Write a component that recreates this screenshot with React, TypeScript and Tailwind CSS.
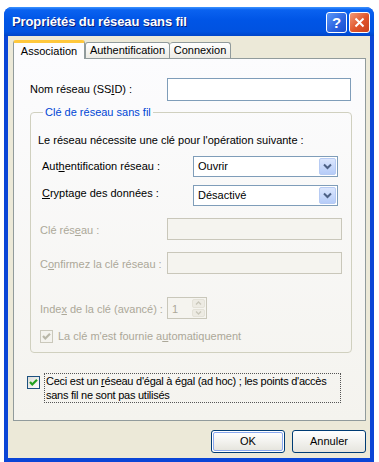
import React from "react";

const F = "font-['Liberation_Sans',Arial,sans-serif]";

function Check({ disabled }: { disabled?: boolean }) {
  return (
    <div
      className={
        "w-[13px] h-[13px] shrink-0 border flex items-center justify-center " +
        (disabled
          ? "border-[#CAC8BB] bg-[#F4F3EE]"
          : "border-[#1C5180] bg-gradient-to-br from-[#DCDCD7] to-white")
      }
    >
      <svg width="11" height="11" viewBox="0 0 11 11">
        <polyline
          points="2,5 4.3,7.5 9,2.8"
          fill="none"
          stroke={disabled ? "#B9B7A8" : "#21A121"}
          strokeWidth="2.2"
        />
      </svg>
    </div>
  );
}

function Select({ value }: { value: string }) {
  return (
    <div className="w-[145px] h-[21px] border border-[#7F9DB9] bg-white flex items-stretch p-[1px]">
      <div className="flex-1 flex items-center pl-[3px] text-black">{value}</div>
      <div className="w-[17px] rounded-[2px] border border-[#B7CBF3] bg-gradient-to-b from-[#DBE6FD] to-[#B6CCF8] flex items-center justify-center">
        <svg width="9" height="7" viewBox="0 0 9 7">
          <polyline points="1,1.5 4.5,5 8,1.5" fill="none" stroke="#4D6185" strokeWidth="2" />
        </svg>
      </div>
    </div>
  );
}

function DisBox({ w }: { w: string }) {
  return <div className={w + " h-[22px] border border-[#C9C7BA] bg-[#F5F4EF]"} />;
}

export default function App() {
  return (
    <div className={"w-[379px] h-[462px] bg-white pt-[7px] pl-[4px] pr-[5px] text-[11px] " + F}>
      <div className="h-[455px] flex flex-col rounded-t-[8px] bg-[#0A45D6] overflow-hidden">
        {/* Title bar */}
        <div className="h-[29px] shrink-0 flex items-center justify-between pl-[8px] pr-[4px] bg-[linear-gradient(to_bottom,#3D95FF_0%,#0A62F0_10%,#0055E6_45%,#0052E0_85%,#0045C8_100%)]">
          <span className="text-white font-bold text-[13px] tracking-[-0.1px] [text-shadow:1px_1px_0_#0A1F7A]">
            Propriétés du réseau sans fil
          </span>
          <div className="flex gap-[2px] pt-[1px]">
            <div className="w-[21px] h-[21px] rounded-[3px] border border-white bg-[linear-gradient(135deg,#5C98F8,#2A62E0_60%,#1A4ED0)] flex items-center justify-center text-white font-bold text-[15px] leading-none">
              ?
            </div>
            <div className="w-[21px] h-[21px] rounded-[3px] border border-white bg-[linear-gradient(135deg,#F29A78,#E0542A_55%,#C8411C)] flex items-center justify-center">
              <svg width="11" height="11" viewBox="0 0 11 11">
                <path d="M1.5 1.5 L9.5 9.5 M9.5 1.5 L1.5 9.5" stroke="white" strokeWidth="2" />
              </svg>
            </div>
          </div>
        </div>
        {/* Body */}
        <div className="flex-1 mx-[4px] mb-[4px] bg-[#ECE9D8] pt-[4px] pl-[5px] pr-[4px] flex flex-col">
          {/* Tabs */}
          <div className="h-[18px] flex items-end relative z-10">
            <div className="h-[19px] w-[72px] -mb-[1px] bg-[#FCFCFE] border-x border-[#919B9C] border-t-[3px] border-t-[#FFC83C] rounded-t-[3px] flex items-center justify-center text-black">
              Association
            </div>
            <div className="h-[16px] w-[85px] bg-gradient-to-b from-white to-[#ECEBE5] border border-b-0 border-[#919B9C] rounded-t-[3px] flex items-center justify-center text-black">
              Authentification
            </div>
            <div className="h-[16px] w-[61px] bg-gradient-to-b from-white to-[#ECEBE5] border border-b-0 border-l-0 border-[#919B9C] rounded-t-[3px] flex items-center justify-center text-black">
              Connexion
            </div>
          </div>
          {/* Panel */}
          <div className="h-[363px] border border-[#919B9C] bg-gradient-to-b from-[#FCFCFE] to-[#F4F3EE] pl-[16px] pr-[14px] flex flex-col text-black">
            <div className="mt-[19px] h-[23px] flex items-center">
              <div className="w-[137px]">
                Nom réseau (SS<u>I</u>D) :
              </div>
              <div className="flex-1 h-[23px] border border-[#7F9DB9] bg-white" />
            </div>
            <fieldset className="mt-[5px] border border-[#D0D0BF] rounded-[4px] pl-[7px] pr-[9px] h-[247px]">
              <legend className="ml-[5px] px-[2px] text-[#0046D5] leading-[13px]">Clé de réseau sans fil</legend>
              <div className="mt-[15px] leading-[13px]">Le réseau nécessite une clé pour l'opération suivante :</div>
              <div className="mt-[9px] flex items-center">
                <div className="w-[155px] pl-[4px]">
                  Aut<u>h</u>entification réseau :
                </div>
                <Select value="Ouvrir" />
              </div>
              <div className="mt-[8px] flex items-center">
                <div className="w-[155px] pl-[4px] -mt-[4px]">
                  <u>C</u>ryptage des données :
                </div>
                <Select value="Désactivé" />
              </div>
              <div className="mt-[12px] flex items-center text-[#ACA899]">
                <div className="w-[129px] pl-[2px] mt-[3px]">
                  Clé rés<u>e</u>au :
                </div>
                <DisBox w="w-[175px]" />
              </div>
              <div className="mt-[12px] flex items-center text-[#ACA899]">
                <div className="w-[129px] pl-[2px] mt-[3px]">
                  C<u>o</u>nfirmez la clé réseau :
                </div>
                <DisBox w="w-[175px]" />
              </div>
              <div className="mt-[23px] flex items-center text-[#ACA899]">
                <div className="w-[129px] pl-[2px] mt-[3px]">
                  Inde<u>x</u> de la clé (avancé) :
                </div>
                <div className="w-[40px] h-[22px] border border-[#C9C7BA] bg-[#F5F4EF] flex">
                  <div className="flex-1 pl-[4px] pt-[3px]">1</div>
                  <div className="w-[15px] flex flex-col gap-[1px] p-[1px]">
                    <div className="flex-1 rounded-[2px] border border-[#E4E2D8] bg-[#EDEBE3] flex items-center justify-center">
                      <svg width="7" height="4" viewBox="0 0 7 4">
                        <polyline points="1,3.5 3.5,1 6,3.5" fill="none" stroke="#C9C7BA" strokeWidth="1.3" />
                      </svg>
                    </div>
                    <div className="flex-1 rounded-[2px] border border-[#E4E2D8] bg-[#EDEBE3] flex items-center justify-center">
                      <svg width="7" height="4" viewBox="0 0 7 4">
                        <polyline points="1,0.5 3.5,3 6,0.5" fill="none" stroke="#C9C7BA" strokeWidth="1.3" />
                      </svg>
                    </div>
                  </div>
                </div>
              </div>
              <div className="mt-[9px] flex items-center gap-[5px] text-[#ACA899] pl-[2px]">
                <Check disabled />
                <span>
                  La clé m'est fournie a<u>u</u>tomatiquement
                </span>
              </div>
            </fieldset>
            <div className="mt-[20px] -ml-[3px] flex items-start">
              <div className="mt-[3px]">
                <Check />
              </div>
              <div className="ml-[4px] border border-dotted border-[#555] px-[1px] leading-[14px] w-[297px] tracking-[-0.25px] whitespace-nowrap">
                <div>
                  Ceci est un <u>r</u>éseau d'égal à égal (ad hoc) ; les points d'accès
                </div>
                <div>sans fil ne sont pas utilisés</div>
              </div>
            </div>
          </div>
          {/* Buttons */}
          <div className="mt-[9px] flex justify-end gap-[7px] pr-[0px]">
            <div className="w-[74px] h-[23px] rounded-[3px] border border-[#003C74] p-[1px] bg-white">
              <div className="w-full h-full rounded-[2px] border border-[#8AA8EE] bg-gradient-to-b from-white to-[#E6E5DE] flex items-center justify-center text-black">
                OK
              </div>
            </div>
            <div className="w-[74px] h-[23px] rounded-[3px] border border-[#003C74] bg-gradient-to-b from-white to-[#E6E5DE] flex items-center justify-center text-black">
              Annuler
            </div>
          </div>
        </div>
      </div>
    </div>
  );
}
